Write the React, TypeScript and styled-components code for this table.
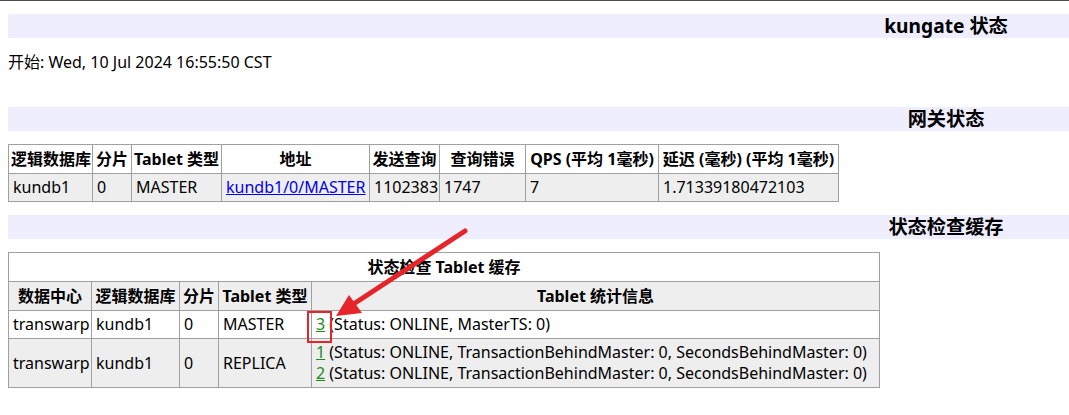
import React from "react";
import styled, { createGlobalStyle } from "styled-components";

const GlobalStyle = createGlobalStyle`
  html, body { overflow: hidden; }
  body {
    margin: 0;
    border-top: 1px solid #4a4848;
    background: #ffffff;
    color: #000000;
    font-family: "Noto Sans", "Noto Sans CJK SC", sans-serif;
    font-size: 16px;
    line-height: 21px;
  }
`;

const Page = styled.div`
  position: relative;
  width: 1876px;
  padding: 0 8px;
  display: flex;
  flex-direction: column;
  align-items: flex-start;
`;

const SectionTitle = styled.h1`
  align-self: stretch;
  margin: 13px 0 0;
  background: #eeeeff;
  text-align: center;
  font-size: 19.2px;
  font-weight: bold;
  line-height: 24px;
`;

const StartInfo = styled.div`
  margin: 14px 0 21px;
  line-height: 21px;
`;

const Table = styled.table<{ $w: number }>`
  margin-top: 13px;
  border-collapse: collapse;
  table-layout: fixed;
  width: ${(p) => p.$w}px;
  border: 1px solid #a0a0a0;
  tr:nth-child(even) { background: #eeeeee; }
  tr:nth-child(odd) { background: #ffffff; }
`;

const Col = styled.col<{ $w: number }>`
  width: ${(p) => p.$w}px;
`;

const Th = styled.th`
  border: 1px solid #a0a0a0;
  padding: 4px 2px 3px;
  font-weight: bold;
  text-align: center;
  white-space: nowrap;
  vertical-align: middle;
`;

const Td = styled.td`
  border: 1px solid #a0a0a0;
  padding: 3px 2px 3px 4px;
  text-align: left;
  white-space: nowrap;
  vertical-align: middle;
`;

const Link = styled.a<{ $tone: "blue" | "green" }>`
  color: ${(p) => (p.$tone === "blue" ? "#0000ee" : "#1a8a1a")};
  text-decoration: underline;
`;

const Overlay = styled.svg`
  position: absolute;
  left: 0;
  top: 0;
  width: 1069px;
  height: 415px;
  pointer-events: none;
`;

const gatewayCols = [84, 39, 90, 148, 70, 86, 133, 180];
const cacheCols = [83, 88, 39, 93, 568];

export default function App() {
  return (
    <>
      <GlobalStyle />
      <Page>
        <SectionTitle>kungate 状态</SectionTitle>
        <StartInfo>开始: Wed, 10 Jul 2024 16:55:50 CST</StartInfo>

        <SectionTitle>网关状态</SectionTitle>
        <Table $w={831}>
          <colgroup>
            {gatewayCols.map((w, i) => (
              <Col key={i} $w={w} />
            ))}
          </colgroup>
          <tbody>
            <tr>
              <Th>逻辑数据库</Th>
              <Th>分片</Th>
              <Th>Tablet 类型</Th>
              <Th>地址</Th>
              <Th>发送查询</Th>
              <Th>查询错误</Th>
              <Th>QPS (平均 1毫秒)</Th>
              <Th>延迟 (毫秒) (平均 1毫秒)</Th>
            </tr>
            <tr>
              <Td>kundb1</Td>
              <Td>0</Td>
              <Td>MASTER</Td>
              <Td>
                <Link $tone="blue" href="#">kundb1/0/MASTER</Link>
              </Td>
              <Td>1102383</Td>
              <Td>1747</Td>
              <Td>7</Td>
              <Td>1.71339180472103</Td>
            </tr>
          </tbody>
        </Table>

        <SectionTitle>状态检查缓存</SectionTitle>
        <Table $w={872}>
          <colgroup>
            {cacheCols.map((w, i) => (
              <Col key={i} $w={w} />
            ))}
          </colgroup>
          <tbody>
            <tr>
              <Th colSpan={5}>状态检查 Tablet 缓存</Th>
            </tr>
            <tr>
              <Th>数据中心</Th>
              <Th>逻辑数据库</Th>
              <Th>分片</Th>
              <Th>Tablet 类型</Th>
              <Th>Tablet 统计信息</Th>
            </tr>
            <tr>
              <Td>transwarp</Td>
              <Td>kundb1</Td>
              <Td>0</Td>
              <Td>MASTER</Td>
              <Td>
                <Link $tone="green" href="#">3</Link> (Status: ONLINE, MasterTS: 0)
              </Td>
            </tr>
            <tr>
              <Td>transwarp</Td>
              <Td>kundb1</Td>
              <Td>0</Td>
              <Td>REPLICA</Td>
              <Td>
                <Link $tone="green" href="#">1</Link> (Status: ONLINE, TransactionBehindMaster: 0, SecondsBehindMaster: 0)
                <br />
                <Link $tone="green" href="#">2</Link> (Status: ONLINE, TransactionBehindMaster: 0, SecondsBehindMaster: 0)
              </Td>
            </tr>
          </tbody>
        </Table>

        <Overlay viewBox="0 0 1069 415">
          <line x1="465" y1="230" x2="352" y2="304" stroke="#e5252a" strokeWidth="5" strokeLinecap="round" />
          <polygon points="336,315 349,294 362,312" fill="#e5252a" />
          <rect x="308" y="311" width="23" height="30" fill="none" stroke="#e5252a" strokeWidth="2" />
        </Overlay>
      </Page>
    </>
  );
}
